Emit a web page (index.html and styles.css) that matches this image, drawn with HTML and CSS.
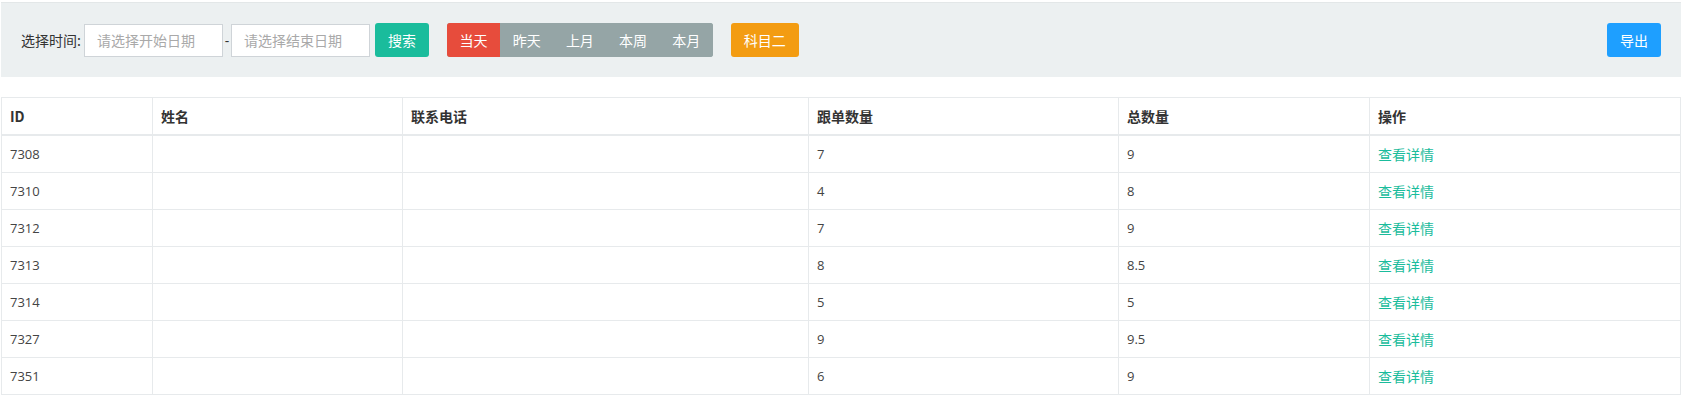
FILE: index.html
```html
<!DOCTYPE html>
<html lang="zh-CN">
<head>
  <meta charset="UTF-8">
  <title>跟单统计</title>
  <link rel="stylesheet" href="styles.css">
</head>
<body>
  <div class="page">
    <div class="toolbar">
      <span class="label">选择时间:</span>
      <input type="text" class="date-input" placeholder="请选择开始日期">
      <span class="dash">-</span>
      <input type="text" class="date-input" placeholder="请选择结束日期">
      <button class="btn btn-search">搜索</button>
      <div class="btn-group">
        <button class="seg active">当天</button>
        <button class="seg">昨天</button>
        <button class="seg">上月</button>
        <button class="seg">本周</button>
        <button class="seg">本月</button>
      </div>
      <button class="btn btn-subject">科目二</button>
      <button class="btn btn-export">导出</button>
    </div>

    <table class="data-table">
      <colgroup>
        <col style="width:151px">
        <col style="width:250px">
        <col style="width:406px">
        <col style="width:310px">
        <col style="width:251px">
        <col>
      </colgroup>
      <thead>
        <tr><th>ID</th><th>姓名</th><th>联系电话</th><th>跟单数量</th><th>总数量</th><th>操作</th></tr>
      </thead>
      <tbody>
        <tr><td>7308</td><td></td><td></td><td>7</td><td>9</td><td><a href="#">查看详情</a></td></tr>
        <tr><td>7310</td><td></td><td></td><td>4</td><td>8</td><td><a href="#">查看详情</a></td></tr>
        <tr><td>7312</td><td></td><td></td><td>7</td><td>9</td><td><a href="#">查看详情</a></td></tr>
        <tr><td>7313</td><td></td><td></td><td>8</td><td>8.5</td><td><a href="#">查看详情</a></td></tr>
        <tr><td>7314</td><td></td><td></td><td>5</td><td>5</td><td><a href="#">查看详情</a></td></tr>
        <tr><td>7327</td><td></td><td></td><td>9</td><td>9.5</td><td><a href="#">查看详情</a></td></tr>
        <tr><td>7351</td><td></td><td></td><td>6</td><td>9</td><td><a href="#">查看详情</a></td></tr>
      </tbody>
    </table>
  </div>
</body>
</html>
```

FILE: styles.css
```css
/* General */
body {
  margin: 0;
  font-family: "Open Sans", "Noto Sans CJK SC", sans-serif;
  font-size: 14px;
  color: #333;
  background: #fff;
}

.page {
  padding: 2px 2px 0 1px;
}

/* Toolbar */
.toolbar {
  display: flex;
  align-items: center;
  height: 34px;
  padding: 20px 20px 20px 20px;
  background: #ecf0f1;
  border-top: 1px solid #e3e7e8;
}

.label {
  margin-right: 3px;
  font-family: "Noto Sans CJK SC", sans-serif;
}

.date-input {
  box-sizing: border-box;
  width: 139px;
  height: 33px;
  padding: 0 12px;
  border: 1px solid #cfd4d8;
  background: #fff;
  font-family: "Noto Sans CJK SC", sans-serif;
  font-size: 14px;
  color: #333;
  outline: none;
}

.date-input::placeholder {
  color: #a9a9a9;
}

.dash {
  width: 8px;
  text-align: center;
}

button {
  font-family: "Noto Sans CJK SC", sans-serif;
  font-size: 14px;
  color: #fff;
  border: none;
  cursor: pointer;
}

.btn {
  height: 34px;
  padding: 0 12px;
  border-radius: 3px;
}

.btn-search {
  width: 54px;
  margin-left: 5px;
  background: #1abc9c;
}

.btn-group {
  display: flex;
  margin-left: 18px;
  border-radius: 3px;
  overflow: hidden;
  background: #95a5a6;
}

.seg {
  width: 53.2px;
  height: 34px;
  padding: 0;
  background: #95a5a6;
}

.seg.active {
  background: #e74c3c;
}

.btn-subject {
  width: 68px;
  margin-left: 18px;
  background: #f39c12;
}

.btn-export {
  width: 54px;
  margin-left: auto;
  background: #1e9fff;
}

/* Table */
.data-table {
  width: 1680px;
  margin-top: 20px;
  border-collapse: collapse;
  table-layout: fixed;
  border: 1px solid #e7eaec;
}

.data-table th,
.data-table td {
  height: 36px;
  padding: 0 8px;
  border: 1px solid #e7eaec;
  text-align: left;
  vertical-align: middle;
}

.data-table th {
  font-family: "Noto Sans CJK SC", sans-serif;
  font-weight: bold;
  font-size: 14px;
  border-bottom: 2px solid #e7eaec;
  color: #333;
}

.data-table td {
  font-size: 13px;
  color: #444;
}

.data-table td a {
  font-family: "Noto Sans CJK SC", sans-serif;
  font-size: 14px;
  color: #1abc9c;
  text-decoration: none;
}
```
